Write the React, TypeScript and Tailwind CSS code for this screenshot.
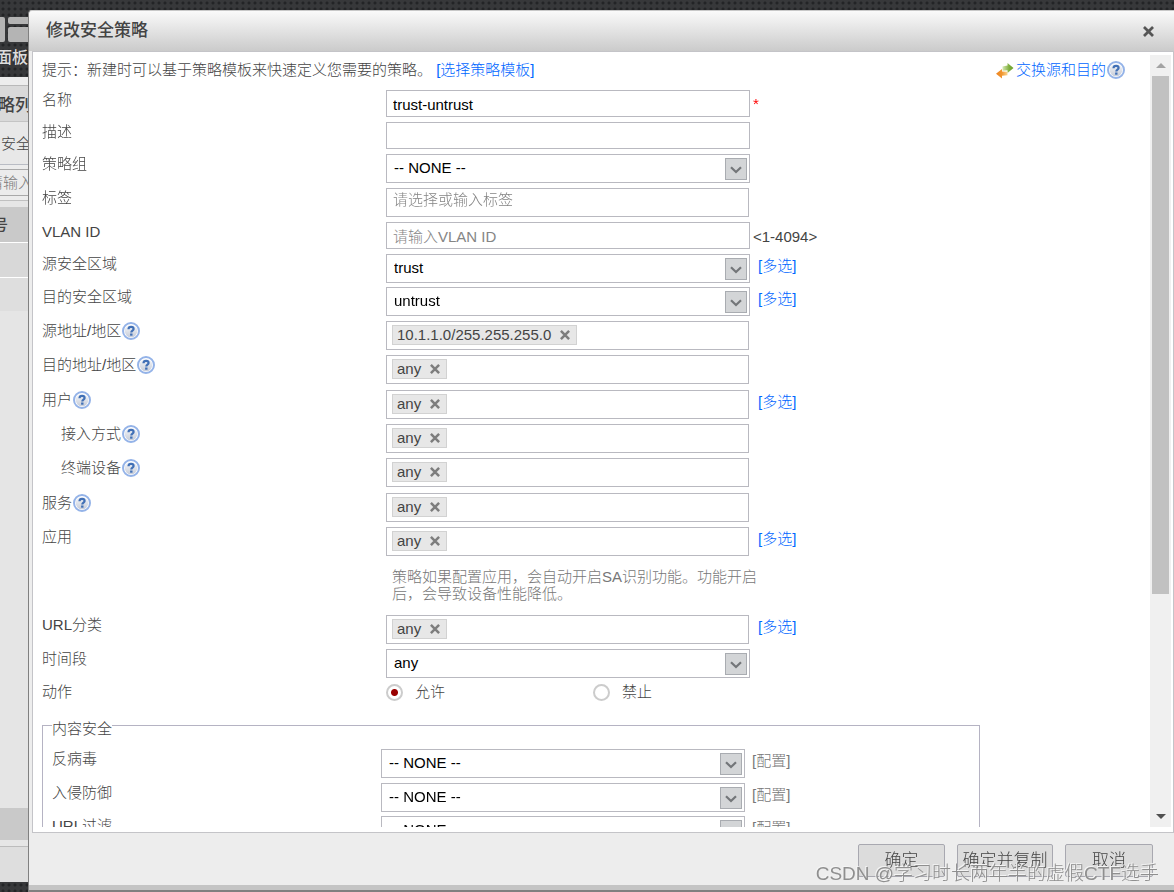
import React, { useId, useState } from 'react';

const CHIP_BOX = 'mr-px flex w-[363px] h-[29px] items-start border border-[#b9b9c0] bg-white pl-[5px] pt-[3px]';
const TEXT_BOX = 'h-[27px] w-[364px] border border-[#b9b9c0] bg-white px-[6px] pt-[2px] text-[15px] text-black placeholder:text-[#858585] outline-none';

function HelpIcon() {
  const fill = useId();
  return (
    <svg viewBox="0 0 18 18" className="ml-px h-[18px] w-[18px] shrink-0" aria-hidden="true">
      <defs>
        <linearGradient id={fill} x1="0" y1="0" x2="0" y2="1">
          <stop offset="0" stopColor="#f8f9fb" />
          <stop offset="1" stopColor="#c6ccd8" />
        </linearGradient>
      </defs>
      <circle cx="9" cy="9" r="8" fill="#ffffff" stroke="#94b3e8" strokeWidth="2" />
      <circle cx="9" cy="9" r="6.3" fill={`url(#${fill})`} />
      <path d="M6.500 7.200C6.500 5.500 7.700 4.900 9.100 4.900c1.500 0 2.500.8 2.500 2 0 1.700-2.300 1.700-2.300 3.500" fill="none" stroke="#4170b6" strokeWidth="2.200" />
      <rect x="8.100" y="11.500" width="2.400" height="2.200" fill="#4170b6" />
    </svg>
  );
}

function SwapIcon() {
  return (
    <svg viewBox="0 0 18 18" className="mt-[2px] h-[18px] w-[18px] shrink-0" aria-hidden="true">
      <defs>
        <linearGradient id="swapGreen" x1="0" y1="0" x2="1" y2="0">
          <stop offset="0" stopColor="#d5e8b4" />
          <stop offset="0.600" stopColor="#7fae3c" />
          <stop offset="1" stopColor="#6a9f2e" />
        </linearGradient>
        <linearGradient id="swapOrange" x1="0" y1="0" x2="1" y2="0">
          <stop offset="0" stopColor="#ee8420" />
          <stop offset="0.500" stopColor="#f0952f" />
          <stop offset="1" stopColor="#fbd58e" />
        </linearGradient>
      </defs>
      <path d="M6.500 4.500L11.500 3.600V1l6 5-6 5V8.200L6.500 8.700Z" fill="url(#swapGreen)" />
      <path d="M11.500 9.800L6 9.400V7L0 11.700 6 16.500v-2.800l5.500-.4Z" fill="url(#swapOrange)" />
    </svg>
  );
}

function Cross({ className }: { className: string }) {
  return (
    <svg viewBox="0 0 10 10" className={className} aria-hidden="true">
      <path d="M0.900 0.900L9.100 9.100M9.100 0.900L0.900 9.100" stroke="currentColor" strokeWidth="2.500" fill="none" />
    </svg>
  );
}

function Select({ id, value }: { id: string; value: string }) {
  return (
    <div className="relative w-[364px]">
      <select
        id={id}
        defaultValue={value}
        className="block h-[29px] w-full appearance-none border border-[#b9b9c0] bg-white pl-[7px] pr-8 text-[15px] text-black outline-none"
      >
        <option>{value}</option>
      </select>
      <span className="pointer-events-none absolute right-[3px] top-1 flex h-[22px] w-[22px] items-center justify-center border border-[#a9acb1] bg-[#d3d5d7]">
        <svg viewBox="0 0 12 8" className="mt-[2px] h-2 w-3" aria-hidden="true">
          <path d="M1 1.200L6 6 11 1.200" stroke="#737679" strokeWidth="2.200" fill="none" />
        </svg>
      </span>
    </div>
  );
}

function Chips({ id, values }: { id: string; values: string[] }) {
  return (
    <div id={id} role="group" className={CHIP_BOX}>
      {values.map((v) => (
        <span key={v} className="flex h-5 items-center border border-[#d2d2d2] bg-[#e7e7e7] pl-1 pr-[6px] leading-[18px]">
          {v}
          <button type="button" aria-label={`删除 ${v}`} className="ml-[9px] text-[#7d7d7d]">
            <Cross className="h-[10px] w-[10px]" />
          </button>
        </span>
      ))}
    </div>
  );
}

type RowProps = {
  label: string;
  height: string;
  help?: boolean;
  sub?: boolean;
  link?: string;
  muted?: boolean;
  narrow?: boolean;
  children: (id: string) => React.ReactNode;
};

function Row({ label, height, help, sub, link, muted, narrow, children }: RowProps) {
  const id = useId();
  return (
    <div className={`flex items-start ${height}`}>
      <div className={`flex shrink-0 items-center leading-5 ${narrow ? 'w-[329px]' : 'w-[344px]'} ${sub ? 'pl-[19px]' : ''}`}>
        <label htmlFor={id}>{label}</label>
        {help && <HelpIcon />}
      </div>
      <div className="flex items-start">
        {children(id)}
        {link && (
          <a href="#" className={muted ? 'ml-[7px] leading-[23px] text-[#777777]' : 'ml-2 leading-[23px] text-[#0066ff]'}>
            {link}
          </a>
        )}
      </div>
    </div>
  );
}

function Radio({ label, checked, onChange }: { label: string; checked: boolean; onChange: () => void }) {
  return (
    <label className="flex w-[207px] items-center gap-3">
      <input
        type="radio"
        name="action"
        checked={checked}
        onChange={onChange}
        className="h-[17px] w-[17px] appearance-none rounded-full border-2 border-[#cccccc] bg-white checked:bg-[radial-gradient(circle,#990000_0_3px,#ffffff_4px)]"
      />
      {label}
    </label>
  );
}

function Backdrop() {
  return (
    <aside className="flex w-7 shrink-0 flex-col overflow-hidden whitespace-nowrap text-[15px] text-[#444444]" aria-hidden="true">
      <div className="flex h-[32px] shrink-0 gap-[3px] pt-[7px]">
        <div className="w-[5px] rounded-r-xs bg-[#b4b4b4]" />
        <div className="flex flex-1 flex-col gap-[3px]">
          <div className="h-[7px] rounded-l-xs bg-[#b4b4b4]" />
          <div className="flex-1 rounded-l-xs bg-[#b4b4b4]" />
        </div>
      </div>
      <div className="-ml-1 h-[35px] shrink-0 pt-[6px] text-base leading-5 font-medium text-[#dddddd]">面板</div>
      <div className="h-[9px] shrink-0 border-b border-[#b9b9b9] bg-[#ededed]" />
      <div className="h-9 shrink-0 border-b border-[#c4c4c4] bg-[#d9d9d9] pt-2 text-[17px] leading-6 font-medium">
        <span className="-ml-[2px]">略列</span>
      </div>
      <div className="h-[43px] shrink-0 border-b border-[#b9bcc4] bg-[#e8e8e8] pl-px pt-3 leading-5">安全</div>
      <div className="h-9 shrink-0 border-b border-[#c0c0c0] bg-[#ececec] pt-[4px]">
        <div className="-ml-3 h-[27px] border-y border-[#a9a9a9] leading-[26px] text-[#7b7b7b]">请输入</div>
      </div>
      <div className="h-[6px] shrink-0 bg-[#e6e6e6]" />
      <div className="h-[36px] shrink-0 border-b border-white bg-[#c9c9c9] leading-[36px] font-medium">
        <span className="-ml-[7px]">号</span>
      </div>
      <div className="h-[35px] shrink-0 border-b border-white bg-[#d8d8d8]" />
      <div className="h-[33px] shrink-0 bg-[#dedede]" />
      <div className="flex-1 bg-[#e5e5e5]" />
      <div className="h-8 shrink-0 bg-[#c9c9c9]" />
      <div className="h-[7px] shrink-0 border-b border-[#bcbcbc] bg-[#e6e6e6]" />
      <div className="mb-[10px] h-[35px] shrink-0 bg-[#dedede]" />
    </aside>
  );
}

export default function App() {
  const [allow, setAllow] = useState(true);
  return (
    <div className="relative flex h-screen flex-col overflow-hidden bg-[#37383a] bg-[radial-gradient(circle,#232426_0_1px,transparent_2px)] bg-size-[6px_6px] pt-[10px] font-['Liberation_Sans','Noto_Sans_CJK_SC',sans-serif] text-[15px] font-light text-[#444444]">
      <div className="flex min-h-0 flex-1">
        <Backdrop />
        <section
          role="dialog"
          aria-labelledby="dialog-title"
          className="flex min-w-0 flex-1 flex-col rounded-tl-sm border-t border-b-2 border-l border-t-[#c8c8c8] border-b-[#808080] border-l-[#808080] bg-[#ededed]"
        >
          <header className="flex h-10 shrink-0 items-center justify-between rounded-tl-sm bg-linear-to-b from-[#fafafa] to-[#cbcbcb] pl-[17px] pr-5">
            <h1 id="dialog-title" className="text-[17px] leading-6 font-medium">修改安全策略</h1>
            <button type="button" aria-label="关闭" className="text-[#555555]">
              <Cross className="h-[11px] w-[11px]" />
            </button>
          </header>

          <div className="flex min-h-0 flex-1 border-x border-y border-[#c4c4c8] bg-white pb-[5px] pt-[3px] ml-[3px]">
            <form className="min-h-0 min-w-0 flex-1 overflow-y-auto pl-[9px] [scrollbar-width:none]">
              <div className="flex h-[35px] items-start justify-between pr-[25px] pt-[5px] leading-5">
                <p>
                  提示：新建时可以基于策略模板来快速定义您需要的策略。{' '}
                  <a href="#" className="text-[#0066ff]">[选择策略模板]</a>
                </p>
                <div className="flex items-center">
                  <SwapIcon />
                  <a href="#" className="ml-[2px] text-[#0066ff]">交换源和目的</a>
                  <HelpIcon />
                </div>
              </div>

              <Row label="名称" height="h-8">
                {(id) => (
                  <>
                    <input id={id} autoFocus defaultValue="trust-untrust" className={TEXT_BOX} />
                    <span className="ml-[3px] leading-7 text-[#ff0000]">*</span>
                  </>
                )}
              </Row>
              <Row label="描述" height="h-8">{(id) => <input id={id} className={TEXT_BOX} />}</Row>
              <Row label="策略组" height="h-[34px]">{(id) => <Select id={id} value="-- NONE --" />}</Row>
              <Row label="标签" height="h-[34px]">
                {(id) => (
                  <div className={CHIP_BOX}>
                    <input id={id} placeholder="请选择或输入标签" className="w-full pl-px text-[15px] leading-4 outline-none placeholder:text-[#858585]" />
                  </div>
                )}
              </Row>
              <Row label="VLAN ID" height="h-8">
                {(id) => (
                  <>
                    <input id={id} placeholder="请输入VLAN ID" className={TEXT_BOX} />
                    <span className="ml-[3px] leading-[29px]">&lt;1-4094&gt;</span>
                  </>
                )}
              </Row>
              <Row label="源安全区域" height="h-[33px]" link="[多选]">{(id) => <Select id={id} value="trust" />}</Row>
              <Row label="目的安全区域" height="h-[34px]" link="[多选]">{(id) => <Select id={id} value="untrust" />}</Row>

              <div className="pb-px">
                <Row label="源地址/地区" height="h-[34px]" help>{(id) => <Chips id={id} values={['10.1.1.0/255.255.255.0']} />}</Row>
                <Row label="目的地址/地区" height="h-[34px]" help>{(id) => <Chips id={id} values={['any']} />}</Row>
              </div>
              <div className="pb-px">
                <Row label="用户" height="h-[34px]" help link="[多选]">{(id) => <Chips id={id} values={['any']} />}</Row>
                <Row label="接入方式" height="h-[34px]" help sub>{(id) => <Chips id={id} values={['any']} />}</Row>
                <Row label="终端设备" height="h-[34px]" help sub>{(id) => <Chips id={id} values={['any']} />}</Row>
              </div>
              <Row label="服务" height="h-[34px]" help>{(id) => <Chips id={id} values={['any']} />}</Row>
              <Row label="应用" height="h-[34px]" link="[多选]">{(id) => <Chips id={id} values={['any']} />}</Row>
              <p className="ml-[350px] w-[370px] pb-[13px] pt-[7px] leading-[17px] text-[#777777]">
                策略如果配置应用，会自动开启SA识别功能。功能开启后，会导致设备性能降低。
              </p>
              <Row label="URL分类" height="h-[34px]" link="[多选]">{(id) => <Chips id={id} values={['any']} />}</Row>
              <Row label="时间段" height="h-[34px]">{(id) => <Select id={id} value="any" />}</Row>
              <div role="radiogroup" aria-labelledby="action-label" className="flex h-[30px] items-start leading-[18px]">
                <span id="action-label" className="w-[344px] shrink-0">动作</span>
                <Radio label="允许" checked={allow} onChange={() => setAllow(true)} />
                <Radio label="禁止" checked={!allow} onChange={() => setAllow(false)} />
              </div>

              <fieldset className="w-[938px] border border-[#b5b3c3] pb-4 pl-[9px]">
                <legend className="pt-2 leading-4">内容安全</legend>
                <div className="pt-[12px]">
                  <Row label="反病毒" height="h-[34px]" narrow link="[配置]" muted>{(id) => <Select id={id} value="-- NONE --" />}</Row>
                  <Row label="入侵防御" height="h-[33px]" narrow link="[配置]" muted>{(id) => <Select id={id} value="-- NONE --" />}</Row>
                  <Row label="URL过滤" height="h-[34px]" narrow link="[配置]" muted>{(id) => <Select id={id} value="-- NONE --" />}</Row>
                </div>
              </fieldset>
            </form>

            <div className="mr-[2px] flex w-[21px] shrink-0 flex-col bg-[#f0f0f0]" aria-hidden="true">
              <div className="flex h-[21px] shrink-0 items-center justify-center">
                <div className="border-x-[5px] border-b-[5px] border-x-transparent border-b-[#a3a3a3]" />
              </div>
              <div className="min-h-0 flex-1 px-[2px]">
                <div className="h-[71%] bg-[#c1c1c1]" />
              </div>
              <div className="flex h-[21px] shrink-0 items-center justify-center">
                <div className="border-x-[5px] border-t-[5px] border-x-transparent border-t-[#505050]" />
              </div>
            </div>
          </div>

          <footer className="flex h-[57px] shrink-0 items-start justify-end gap-3 border-b-[5px] border-[#c4c4c4] pr-[21px] pt-[11px] text-[17px]">
            <button type="button" className="h-[33px] min-w-[87px] rounded-xs border border-[#a8a8b0] bg-[#dcdcdc]">确定</button>
            <button type="button" className="h-[33px] min-w-[96px] rounded-xs border border-[#a8a8b0] bg-[#dcdcdc]">确定并复制</button>
            <button type="button" className="h-[33px] min-w-[88px] rounded-xs border border-[#a8a8b0] bg-[#dcdcdc]">取消</button>
          </footer>
        </section>
      </div>
      <p className="pointer-events-none absolute right-[15px] bottom-[6px] text-[19px] leading-6 whitespace-nowrap text-[#8f8f8f] [text-shadow:-1px_-1px_0_#f4f4f4]">
        CSDN @学习时长两年半的虚假CTF选手
      </p>
    </div>
  );
}
